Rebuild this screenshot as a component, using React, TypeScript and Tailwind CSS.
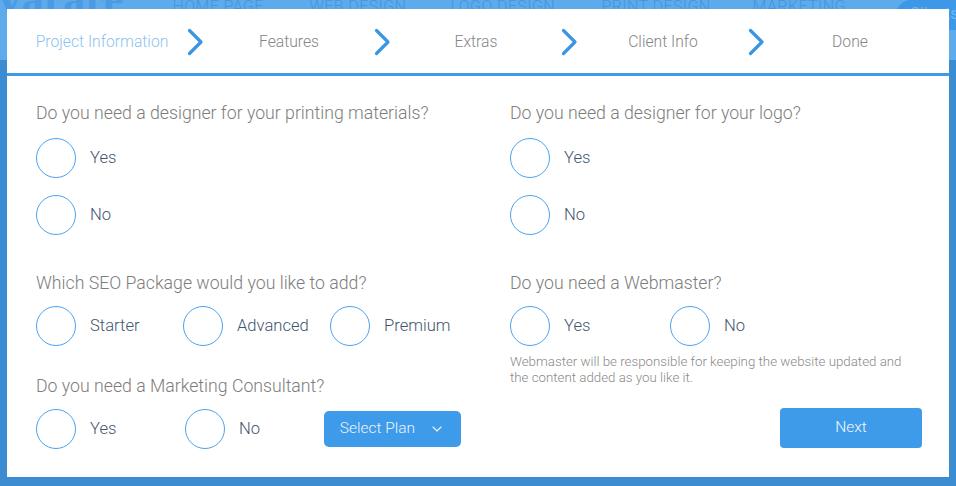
import { ChevronDown } from "lucide-react";

const font = { fontFamily: "Roboto, 'Open Sans', sans-serif" };

const steps = ["Project Information", "Features", "Extras", "Client Info", "Done"];
const navItems = ["HOME PAGE", "WEB DESIGN", "LOGO DESIGN", "PRINT DESIGN", "MARKETING"];

function StepChevron() {
  return (
    <svg width="17" height="28" viewBox="0 0 17 28" className="shrink-0">
      <path
        d="M2.5 2.5 L14 14 L2.5 25.5"
        fill="none"
        stroke="#3a96e4"
        strokeWidth="3.2"
        strokeLinecap="round"
        strokeLinejoin="round"
      />
    </svg>
  );
}

function Radio({ label, className = "" }: { label: string; className?: string }) {
  return (
    <label className={`flex items-center cursor-pointer ${className}`}>
      <span className="w-10 h-10 rounded-full border border-[#4ba3ec] bg-white shrink-0" />
      <span className="ml-[14px] text-[16.6px] font-light text-[#3f566e]">{label}</span>
    </label>
  );
}

function Question({ children, className = "" }: { children: string; className?: string }) {
  return (
    <p className={`text-[17.7px] leading-6 font-light text-[#7d7d7d] ${className}`}>{children}</p>
  );
}

export default function App() {
  return (
    <div className="relative w-[956px] h-[486px] overflow-hidden bg-[#3c8cd2]" style={font}>
      {/* site behind the modal */}
      <div className="h-[60px] bg-[#5eaaea] flex items-start">
        <span
          className="ml-[-6px] mt-[-22px] text-[44px] font-bold text-[#4a9be3] leading-none"
          style={{ fontFamily: "'Liberation Serif', serif" }}
        >
          Varare
        </span>
        <nav className="flex ml-[49px] mt-[-5px]">
          {navItems.map((n, i) => (
            <span
              key={n}
              className={`text-[16px] font-light tracking-wide text-[#4595e0] ${
                ["w-[137px]", "w-[141px]", "w-[151px]", "w-[151px]", "w-[143px]"][i]
              }`}
            >
              {n}
            </span>
          ))}
        </nav>
        <span className="ml-auto h-[30px] w-[62px] rounded-l-full bg-[#3d98e8] text-[#6fb4ef] text-[16px] pl-[14px] pt-[2px]">
          Clients
        </span>
      </div>

      {/* modal */}
      <div className="absolute left-[7px] top-[9px] w-[942px] h-[468px] bg-white">
        <div className="h-[67px] flex items-center pl-[10px] pt-[1px] border-b-[3px] border-[#3d9be7]">
          {steps.map((s, i) => (
            <div key={s} className="w-[187px] shrink-0 flex items-center">
              <span
                className={`flex-1 text-center text-[15.7px] font-light ${
                  i === 0 ? "text-[#8cc2f0]" : "text-[#858585]"
                }`}
              >
                {s}
              </span>
              {i < steps.length - 1 ? <StepChevron /> : <span className="w-[17px]" />}
            </div>
          ))}
        </div>

        <div className="flex pl-[29px] pt-[25px]">
          <div className="w-[474px] flex flex-col">
            <Question>Do you need a designer for your printing materials?</Question>
            <Radio label="Yes" className="mt-[13px]" />
            <Radio label="No" className="mt-[17px]" />

            <Question className="mt-[36px]">Which SEO Package would you like to add?</Question>
            <div className="flex mt-[11px]">
              <Radio label="Starter" className="w-[147px]" />
              <Radio label="Advanced" className="w-[147px]" />
              <Radio label="Premium" />
            </div>

            <Question className="mt-[28px]">Do you need a Marketing Consultant?</Question>
            <div className="flex items-center mt-[11px]">
              <Radio label="Yes" className="w-[149px]" />
              <Radio label="No" className="w-[139px]" />
              <button className="w-[137px] h-[36px] rounded-[5px] bg-[#3d9be9] text-[#eaf4fd] text-[15.5px] font-light flex items-center justify-center gap-[14px]">
                Select Plan
                <ChevronDown size={16} strokeWidth={1.6} />
              </button>
            </div>
          </div>

          <div className="w-[412px] flex flex-col">
            <Question>Do you need a designer for your logo?</Question>
            <Radio label="Yes" className="mt-[13px]" />
            <Radio label="No" className="mt-[17px]" />

            <Question className="mt-[36px]">Do you need a Webmaster?</Question>
            <div className="flex mt-[11px]">
              <Radio label="Yes" className="w-[160px]" />
              <Radio label="No" />
            </div>
            <p className="mt-[8px] text-[13.3px] leading-[16px] font-light text-[#8a8a8a] w-[412px]">
              Webmaster will be responsible for keeping the website updated and the content added
              as you like it.
            </p>
            <div className="flex justify-end mt-[22px]">
              <button className="w-[142px] h-[40px] rounded-[4px] bg-[#3d9be9] text-[#f4f9fe] text-[15.5px] font-light">
                Next
              </button>
            </div>
          </div>
        </div>
      </div>
    </div>
  );
}
